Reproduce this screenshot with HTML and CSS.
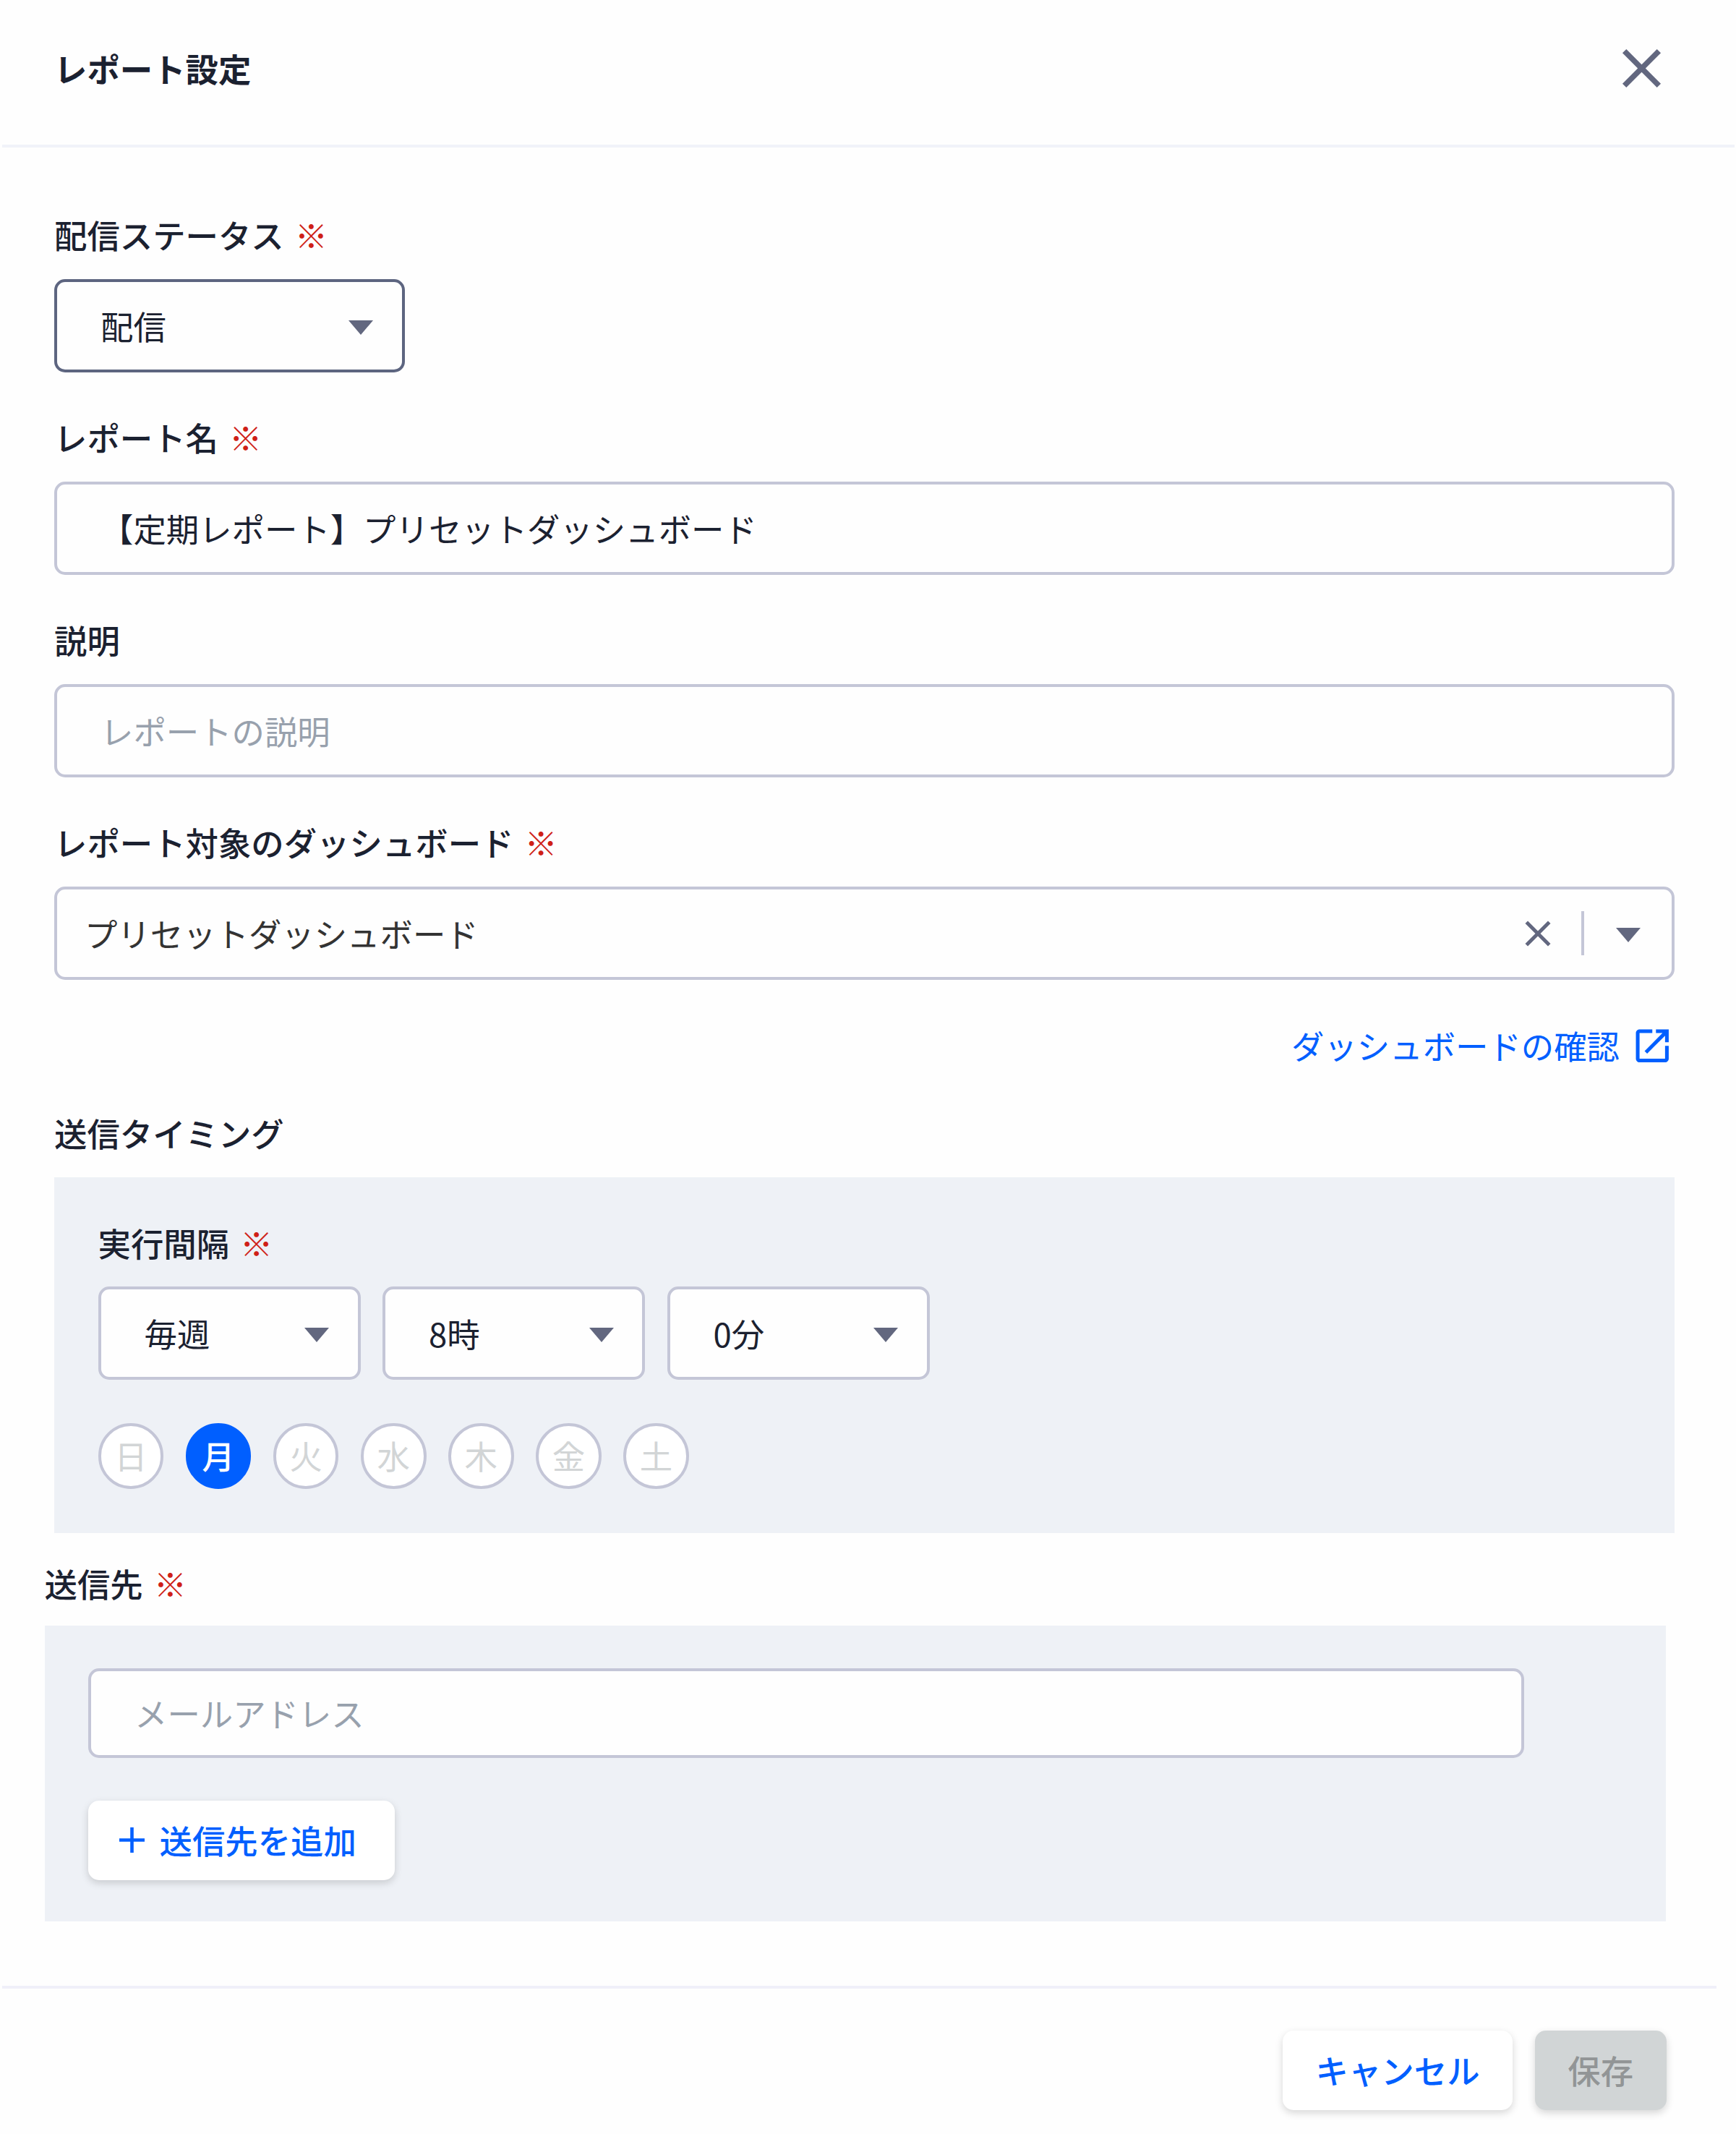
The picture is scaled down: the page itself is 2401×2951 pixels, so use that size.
FILE: index.html
```html
<!DOCTYPE html>
<html lang="ja">
<head>
<meta charset="utf-8">
<title>レポート設定</title>
<link rel="stylesheet" href="styles.css">
</head>
<body>
<div class="dialog">
  <header class="dialog-header">
    <h1 class="dialog-title">レポート設定</h1>
    <svg class="icon-close" viewBox="0 0 24 24"><path d="M19 6.41 17.59 5 12 10.59 6.41 5 5 6.41 10.59 12 5 17.59 6.41 19 12 13.41 17.59 19 19 17.59 13.41 12z"/></svg>
  </header>

  <main class="dialog-body">
    <section class="field">
      <div class="label">配信ステータス<span class="required">※</span></div>
      <div class="control select select-status"><span>配信</span><svg class="caret" viewBox="0 0 34 20"><path d="M0 0h34L17 20z"/></svg></div>
    </section>
    <section class="field">
      <div class="label">レポート名<span class="required">※</span></div>
      <div class="control">【定期レポート】プリセットダッシュボード</div>
    </section>
    <section class="field">
      <div class="label">説明</div>
      <div class="control placeholder">レポートの説明</div>
    </section>
    <section class="field">
      <div class="label">レポート対象のダッシュボード<span class="required">※</span></div>
      <div class="control combo">
        <span class="combo-value">プリセットダッシュボード</span>
        <svg class="icon-clear" viewBox="0 0 24 24"><path d="M19 6.41 17.59 5 12 10.59 6.41 5 5 6.41 10.59 12 5 17.59 6.41 19 12 13.41 17.59 19 19 17.59 13.41 12z"/></svg>
        <span class="combo-divider"></span>
        <svg class="caret" viewBox="0 0 34 20"><path d="M0 0h34L17 20z"/></svg>
      </div>
    </section>
    <div class="link-row">
      <a class="link">ダッシュボードの確認<svg class="icon-open" viewBox="0 0 24 24"><path d="M19 19H5V5h7V3H5c-1.11 0-2 .9-2 2v14c0 1.1.89 2 2 2h14c1.1 0 2-.9 2-2v-7h-2v7zM14 3v2h3.59l-9.83 9.83 1.41 1.41L19 6.41V10h2V3h-7z"/></svg></a>
    </div>
    <section class="timing">
      <div class="label">送信タイミング</div>
      <div class="panel">
        <div class="label">実行間隔<span class="required">※</span></div>
        <div class="select-row">
          <div class="control select"><span>毎週</span><svg class="caret" viewBox="0 0 34 20"><path d="M0 0h34L17 20z"/></svg></div>
          <div class="control select"><span>8時</span><svg class="caret" viewBox="0 0 34 20"><path d="M0 0h34L17 20z"/></svg></div>
          <div class="control select"><span>0分</span><svg class="caret" viewBox="0 0 34 20"><path d="M0 0h34L17 20z"/></svg></div>
        </div>
        <div class="days">
          <span class="day">日</span>
          <span class="day day-on">月</span>
          <span class="day">火</span>
          <span class="day">水</span>
          <span class="day">木</span>
          <span class="day">金</span>
          <span class="day">土</span>
        </div>
      </div>
    </section>
    <section class="recipients">
      <div class="label">送信先<span class="required">※</span></div>
      <div class="panel panel-recipients">
        <div class="control placeholder control-mail">メールアドレス</div>
        <button class="button button-add"><svg class="icon-plus" viewBox="0 0 35 35"><path d="M0 17.5h35M17.5 0v35"/></svg>送信先を追加</button>
      </div>
    </section>
  </main>

  <footer class="dialog-footer">
    <button class="button">キャンセル</button>
    <button class="button button-disabled">保存</button>
  </footer>
</div>
</body>
</html>
```
FILE: styles.css
```css
* { box-sizing: border-box; }

body {
  margin: 0;
  background: #fefefe;
  color: #1b2130;
  font-family: "Noto Sans CJK JP", sans-serif;
  font-size: 45.4px;
  line-height: 60px;
}

.dialog {
  width: 2401px;
  height: 2951px;
  overflow: hidden;
}

.dialog-header {
  display: flex;
  align-items: center;
  justify-content: space-between;
  height: 204px;
  margin: 0 2px 0 3px;
  padding: 0 83px 11px 72px;
  border-bottom: 4px solid #f1f3f9;
}

.dialog-title {
  margin: 0;
  padding-bottom: 1px;
  font-size: 45.4px;
  font-weight: 700;
}

.icon-close { width: 91px; height: 91px; fill: #62677f; }

.dialog-body { padding: 90px 85.5px 0 75px; }

.field { height: 280px; }

.label {
  height: 92px;
  font-weight: 500;
}

.required {
  margin-left: 15px;
  color: #cf1f17;
  font-weight: 400;
}

.control {
  display: flex;
  align-items: center;
  height: 129px;
  padding: 0 39.5px 2px 60px;
  border: 4px solid #c4c6d7;
  border-radius: 15px;
  background: #fefefe;
}

.placeholder { color: #98a1ad; }

.select {
  justify-content: space-between;
  width: 363px;
}

.select-status {
  width: 484.5px;
  border-color: #5d6580;
}

.caret {
  width: 34px;
  height: 20px;
  margin-top: 6px;
  fill: #62677f;
}

.combo { padding: 0 43px 2px 38px; color: #333; }
.combo-value { flex: 1; }
.icon-clear { width: 60px; height: 60px; margin-top: 2px; fill: #62677f; }

.combo-divider {
  width: 4px;
  height: 61px;
  margin: 2px 43.5px 0 30px;
  background: #c4c6d7;
}

.link-row {
  display: flex;
  justify-content: flex-end;
  height: 122px;
  padding-top: 1px;
}

.link {
  display: flex;
  align-items: center;
  gap: 15px;
  height: 60px;
  color: #005fff;
}

.icon-open { width: 60.5px; height: 60.5px; margin-top: 2px; fill: #005fff; }

.timing > .label { height: 91.5px; }

.panel {
  height: 492px;
  padding: 60.5px 60.5px 0;
  background: #eef1f6;
}

.panel > .label { height: 91px; }

.select-row { display: flex; gap: 30.5px; }

.days {
  display: flex;
  gap: 30.3px;
  margin-top: 60px;
}

.day {
  display: flex;
  align-items: center;
  justify-content: center;
  width: 90.8px;
  height: 90.8px;
  padding-bottom: 2px;
  border: 4px solid #c4c6d7;
  border-radius: 50%;
  background: #fff;
  color: #d2d5d6;
}

.day-on {
  border-color: #005fff;
  background: #005fff;
  color: #fff;
  font-weight: 500;
}

.recipients {
  margin: 39.5px 11.5px 0 -13.5px;
}

.recipients > .label { height: 89px; }

.panel-recipients { height: 409px; padding-top: 59px; }

.control-mail {
  width: 1986px;
  height: 124px;
}

.button {
  display: inline-flex;
  align-items: center;
  height: 110px;
  padding: 0 45.4px 1px;
  border: 0;
  border-radius: 15px;
  background: #fff;
  box-shadow: 0 4px 11px rgba(0, 0, 0, 0.16);
  color: #005fff;
  font: inherit;
  font-weight: 500;
}

.button-add {
  margin-top: 58.5px;
  padding: 0 53px 2px 42.5px;
  gap: 21px;
}

.icon-plus {
  width: 35px;
  height: 35px;
  margin-top: 2px;
  stroke: #005fff;
  stroke-width: 4.6;
}

.button-disabled {
  background: #d1d5d6;
  color: #929596;
}

.dialog-footer {
  display: flex;
  justify-content: flex-end;
  gap: 31px;
  margin: 88.5px 27px 0 3px;
  padding: 58px 69.5px 0 0;
  border-top: 4px solid #f0f0f9;
}
```
